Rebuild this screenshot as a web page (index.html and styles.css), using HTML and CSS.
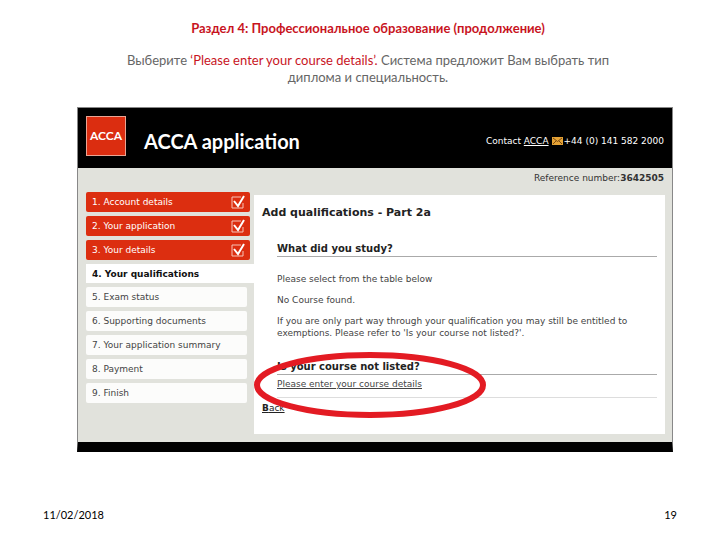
FILE: index.html
```
<!DOCTYPE html>
<html lang="ru">
<head>
<meta charset="utf-8">
<title>Раздел 4: Профессиональное образование</title>
<link rel="stylesheet" href="styles.css">
</head>
<body>
<main class="slide">
  <header class="intro">
    <h1>Раздел 4: Профессиональное образование (продолжение)</h1>
    <p>Выберите <em>‘Please enter your course details’.</em> Система предложит Вам выбрать тип диплома и специальность.</p>
  </header>
  <section class="app" lang="en">
    <div class="banner">
      <div class="logo">ACCA</div>
      <h2>ACCA application</h2>
      <div class="contact">Contact&nbsp;<a href="#">ACCA</a>
        <svg class="mail" viewBox="0 0 11 8"><rect width="11" height="8" fill="#e5a336"/><path d="M1 1l4.500 3.500L10 1M1 7l3-3M10 7L7 4" fill="none" stroke="#7b4a12"/></svg>
        <span>+44 (0) 141 582 2000</span></div>
    </div>
    <p class="reference">Reference number:<b>3642505</b></p>
    <div class="columns">
      <ol class="steps">
        <li class="done">1. Account details <svg class="tick" viewBox="0 0 16 16"><path d="M11 3H2v11h11V9"/><path class="mark" d="M4 7l4 5 6-10"/></svg></li>
        <li class="done">2. Your application <svg class="tick" viewBox="0 0 16 16"><path d="M11 3H2v11h11V9"/><path class="mark" d="M4 7l4 5 6-10"/></svg></li>
        <li class="done">3. Your details <svg class="tick" viewBox="0 0 16 16"><path d="M11 3H2v11h11V9"/><path class="mark" d="M4 7l4 5 6-10"/></svg></li>
        <li class="current">4. Your qualifications</li>
        <li>5. Exam status</li>
        <li>6. Supporting documents</li>
        <li>7. Your application summary</li>
        <li>8. Payment</li>
        <li>9. Finish</li>
      </ol>
      <div class="panel">
        <h3>Add qualifications - Part 2a</h3>
        <div class="study">
          <h4>What did you study?</h4>
          <p>Please select from the table below</p>
          <p>No Course found.</p>
          <p>If you are only part way through your qualification you may still be entitled to exemptions. Please refer to 'Is your course not listed?'.</p>
        </div>
        <div class="unlisted">
          <h4>Is your course not listed?</h4>
          <a href="#">Please enter your course details</a>
          <svg class="ring" viewBox="0 0 232 66"><ellipse cx="116" cy="33" rx="113" ry="30"/></svg>
        </div>
        <a class="back" href="#"><b>B</b>ack</a>
      </div>
    </div>
  </section>
  <footer class="foot"><time>11/02/2018</time><span>19</span></footer>
</main>
</body>
</html>
```
FILE: styles.css
```
* { box-sizing: border-box; }
body {
  margin: 0;
  background: #fff;
  font-family: "DejaVu Sans", sans-serif;
  font-size: 9px;
  line-height: 12px;
  color: #444;
}
h1, h2, h3, h4, p, ol { margin: 0; padding: 0; }
a { color: inherit; }

.slide { padding: 20px 43px 0; }
.intro {
  padding: 0 60px 0 76px;
  margin-bottom: 21px;
  text-align: center;
  font-family: Lato, sans-serif;
  font-size: 13px;
  line-height: 17px;
  color: #666;
}
.intro h1 { margin-bottom: 16px; font-size: 13px; line-height: 16px; color: #c8141e; }
.intro em { font-style: normal; color: #c8141e; }

.app {
  margin: 0 4px 0 34px;
  border: 1px solid #888;
  border-bottom: 10px solid #000;
  background: #e1e2dc;
}
.banner {
  display: flex;
  align-items: center;
  height: 60px;
  padding: 0 8px;
  background: #000;
  color: #fff;
}
.logo {
  width: 40px;
  height: 40px;
  margin-right: 18px;
  margin-bottom: 4px;
  border: 1px solid #e9a493;
  background: #db2d10;
  text-align: center;
  font: bold 12px/38px Lato, sans-serif;
}
.banner h2 { padding-top: 6px; font: bold 20px/24px Lato, sans-serif; }
.contact { display: flex; align-items: center; margin-left: auto; padding-top: 6px; }
.mail { width: 11px; height: 8px; margin: 0 1px 0 3px; }
.reference { padding: 4px 8px 0; text-align: right; color: #333; }

.columns { display: flex; align-items: stretch; padding: 8px 7px 8px 8px; }
.steps { flex: 0 0 168px; list-style: none; }
.steps li {
  display: flex;
  align-items: center;
  justify-content: space-between;
  height: 20px;
  margin: 0 7px 4px 0;
  padding: 0 4px 0 6px;
  border-radius: 2px;
  background: #fcfcfb;
}
.steps .done { margin-right: 4px; background: #dc2e10; color: #fff; }
.steps .current { height: 19px; margin-right: 0; border-radius: 0; background: #fff; font-weight: bold; color: #111; }
.tick { width: 16px; height: 16px; fill: none; stroke: #f7c4b8; }
.tick .mark { stroke: #fff; stroke-width: 2; }

.panel { flex: 1; min-width: 0; margin-top: 3px; padding: 11px 8px 20px; background: #fff; }
.panel h3 { margin-bottom: 22px; font-size: 11px; line-height: 14px; color: #222; }
.study, .unlisted { margin-left: 15px; }
.panel h4 { border-bottom: 1px solid #aaa; font-size: 10px; line-height: 14px; color: #222; }
.study h4 { margin-bottom: 16px; }
.study p { margin-bottom: 9px; }
.unlisted { position: relative; margin-top: 21px; padding-bottom: 7px; border-bottom: 1px solid #ddd; }
.unlisted a { display: inline-block; padding-top: 3px; }
.ring { position: absolute; left: -23px; top: -8px; width: 232px; height: 66px; overflow: visible; }
.ring ellipse { fill: none; stroke: #e31b23; stroke-width: 6; }
.back { display: inline-block; margin-top: 4px; color: #222; }

.foot {
  display: flex;
  justify-content: space-between;
  margin-top: 54px;
  font: 11px/18px Lato, sans-serif;
  color: #000;
}
```
